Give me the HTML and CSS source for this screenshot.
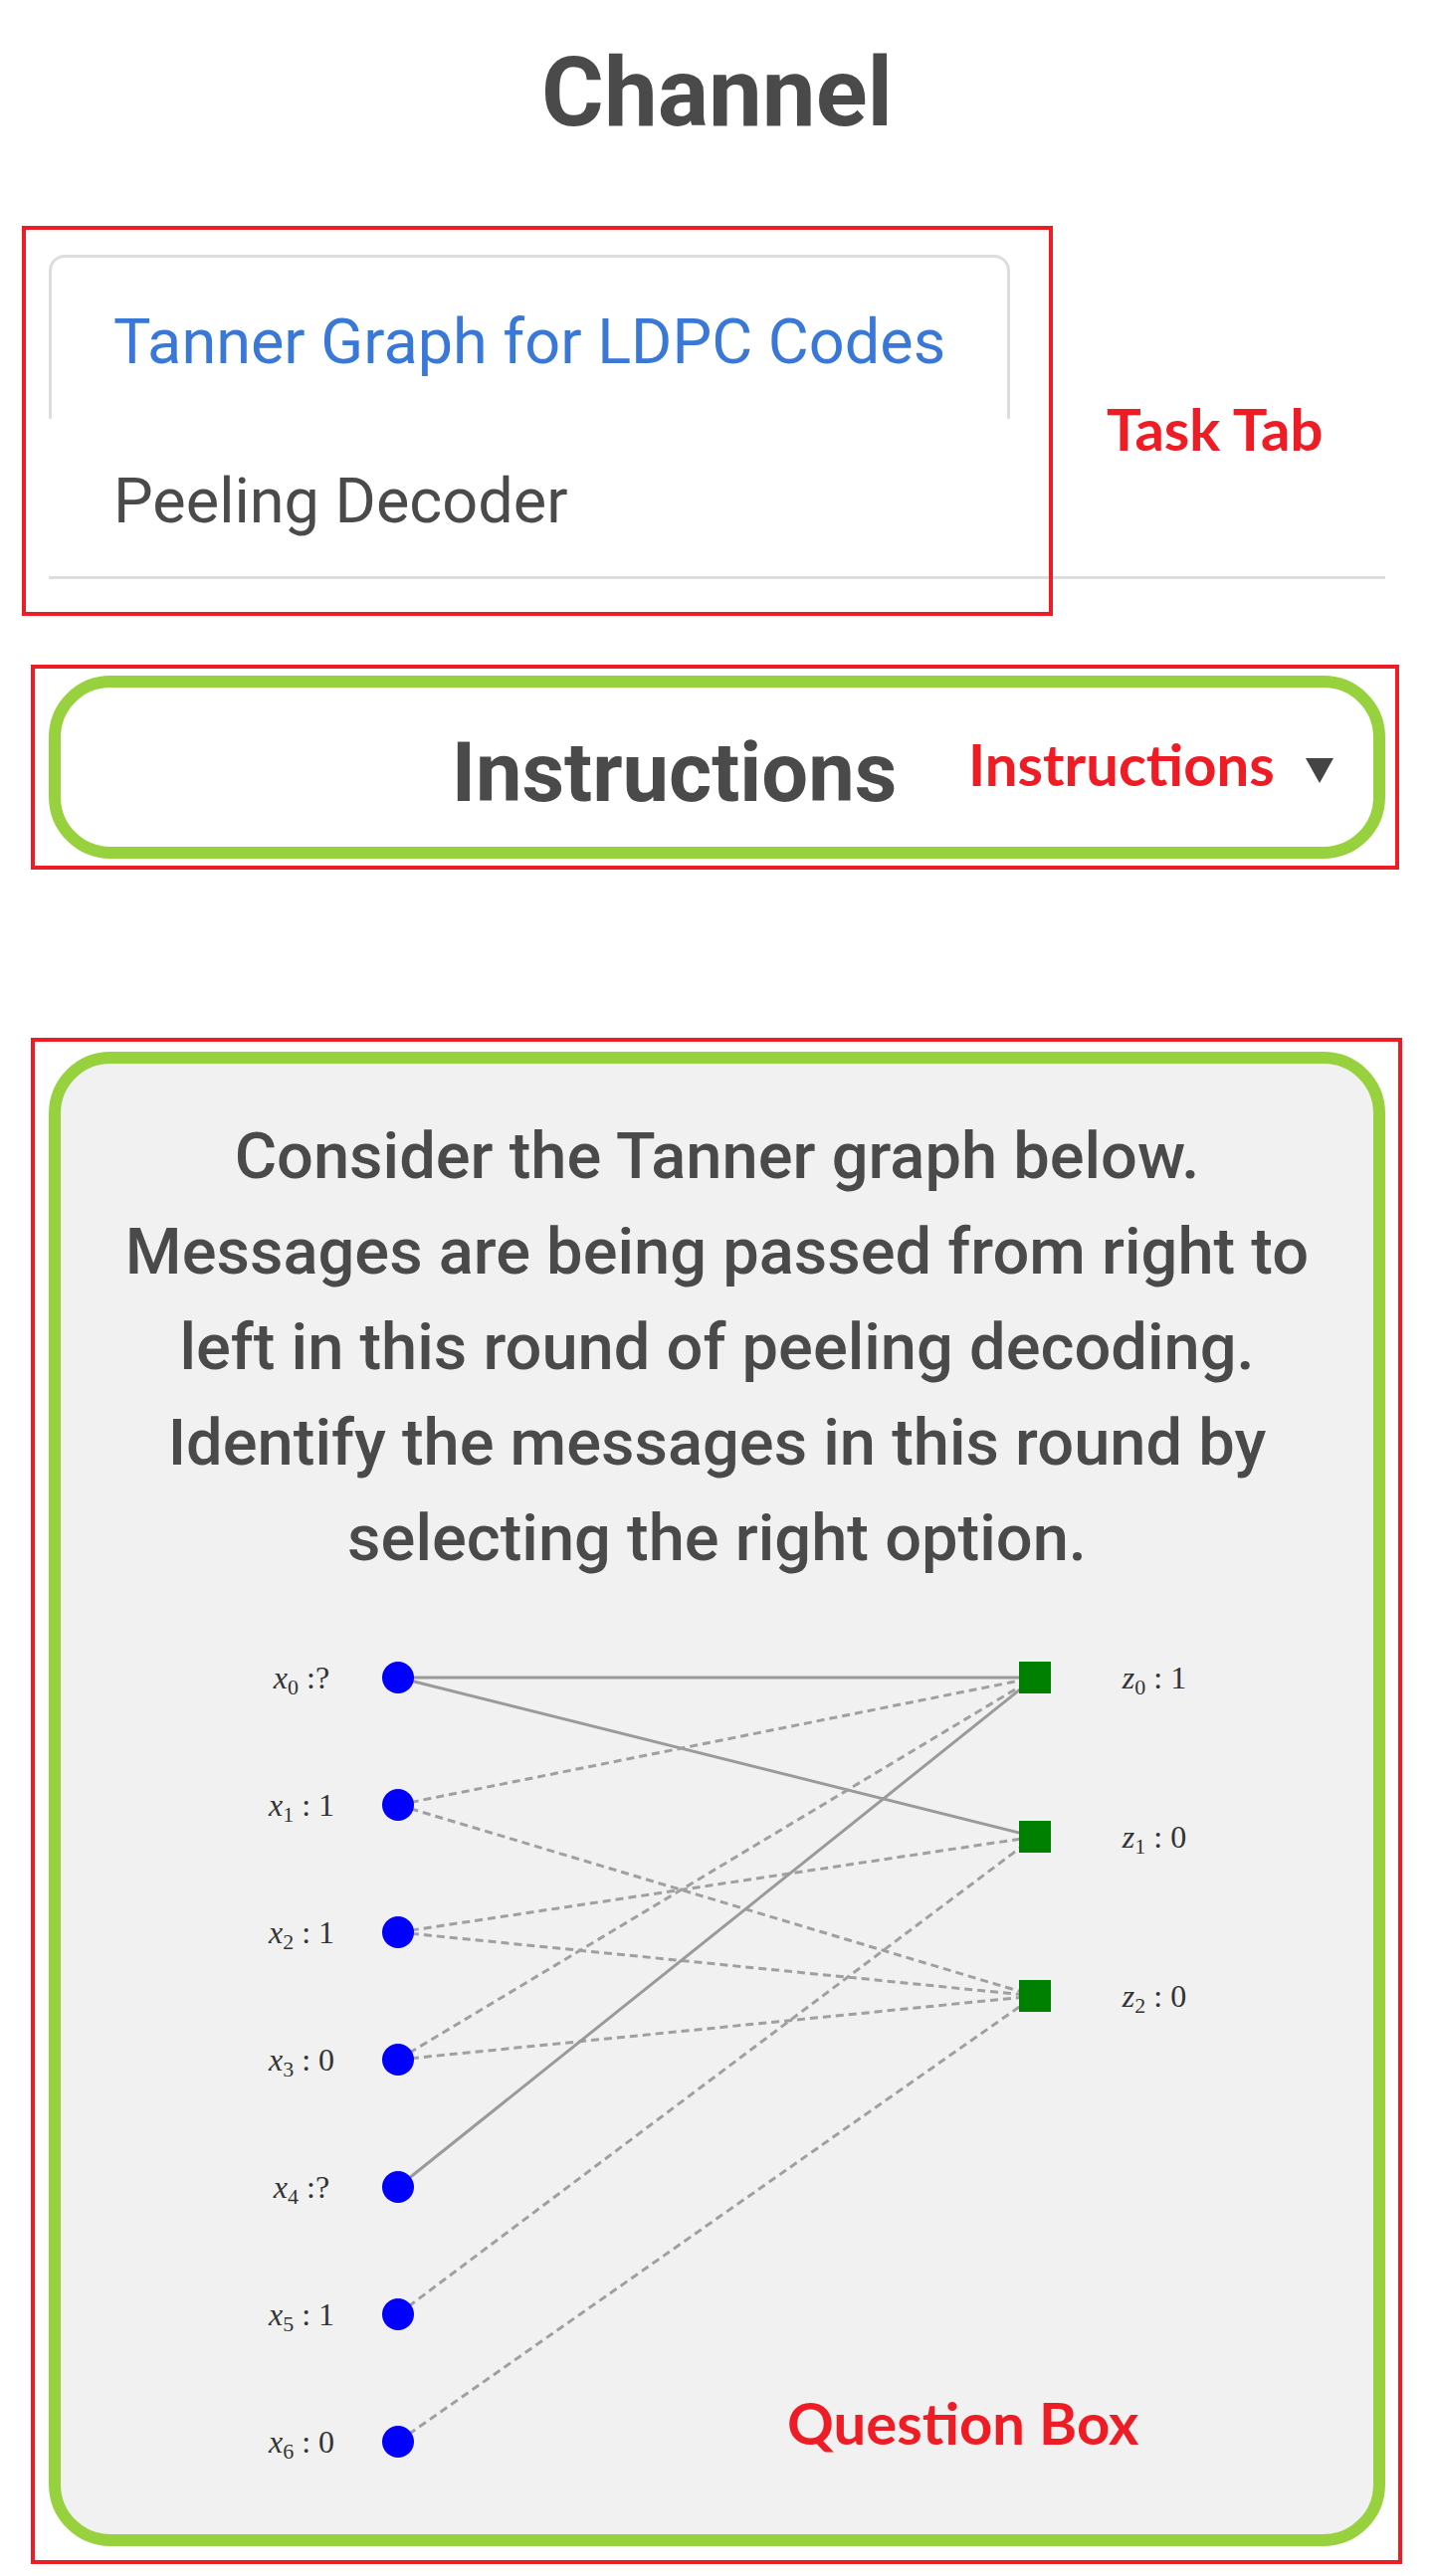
FILE: index.html
```html
<!DOCTYPE html>
<html lang="en">
<head>
<meta charset="utf-8">
<title>Channel</title>
<link rel="stylesheet" href="styles.css">
</head>
<body>
<main class="page">
  <h1 class="title">Channel</h1>

  <ul class="tabs">
    <li class="tab tab-hover"><a>Tanner Graph for LDPC Codes</a></li>
    <li class="tab tab-active"><a>Peeling Decoder</a></li>
  </ul>

  <section class="instructions">
    <h2 class="instructions-title">Instructions</h2>
    <span class="caret"></span>
  </section>

  <section class="question">
    <p class="question-text">Consider the Tanner graph below. Messages are being passed from right to left in this round of peeling decoding. Identify the messages in this round by selecting the right option.</p>
    <svg class="tanner" viewBox="61 1594 1319 953" xmlns="http://www.w3.org/2000/svg">
      <g class="edges">
        <line class="edge" x1="400" y1="1686" x2="1040" y2="1686"/>
        <line class="edge" x1="400" y1="1686" x2="1040" y2="1846"/>
        <line class="edge dash" x1="400" y1="1814" x2="1040" y2="1686"/>
        <line class="edge dash" x1="400" y1="1814" x2="1040" y2="2006"/>
        <line class="edge dash" x1="400" y1="1942" x2="1040" y2="1846"/>
        <line class="edge dash" x1="400" y1="1942" x2="1040" y2="2006"/>
        <line class="edge dash" x1="400" y1="2070" x2="1040" y2="1686"/>
        <line class="edge dash" x1="400" y1="2070" x2="1040" y2="2006"/>
        <line class="edge" x1="400" y1="2198" x2="1040" y2="1686"/>
        <line class="edge dash" x1="400" y1="2326" x2="1040" y2="1846"/>
        <line class="edge dash" x1="400" y1="2454" x2="1040" y2="2006"/>
      </g>
      <g class="vars">
        <circle class="var" cx="400" cy="1686" r="16"/>
        <circle class="var" cx="400" cy="1814" r="16"/>
        <circle class="var" cx="400" cy="1942" r="16"/>
        <circle class="var" cx="400" cy="2070" r="16"/>
        <circle class="var" cx="400" cy="2198" r="16"/>
        <circle class="var" cx="400" cy="2326" r="16"/>
        <circle class="var" cx="400" cy="2454" r="16"/>
      </g>
      <g class="checks">
        <rect class="chk" x="1024" y="1670" width="32" height="32"/>
        <rect class="chk" x="1024" y="1830" width="32" height="32"/>
        <rect class="chk" x="1024" y="1990" width="32" height="32"/>
      </g>
      <g class="labels">
        <text class="lbl" x="303" y="1697" text-anchor="middle"><tspan class="it">x</tspan><tspan class="sub" dy="6">0</tspan><tspan dy="-6"> :?</tspan></text>
        <text class="lbl" x="303" y="1825" text-anchor="middle"><tspan class="it">x</tspan><tspan class="sub" dy="6">1</tspan><tspan dy="-6"> : 1</tspan></text>
        <text class="lbl" x="303" y="1953" text-anchor="middle"><tspan class="it">x</tspan><tspan class="sub" dy="6">2</tspan><tspan dy="-6"> : 1</tspan></text>
        <text class="lbl" x="303" y="2081" text-anchor="middle"><tspan class="it">x</tspan><tspan class="sub" dy="6">3</tspan><tspan dy="-6"> : 0</tspan></text>
        <text class="lbl" x="303" y="2209" text-anchor="middle"><tspan class="it">x</tspan><tspan class="sub" dy="6">4</tspan><tspan dy="-6"> :?</tspan></text>
        <text class="lbl" x="303" y="2337" text-anchor="middle"><tspan class="it">x</tspan><tspan class="sub" dy="6">5</tspan><tspan dy="-6"> : 1</tspan></text>
        <text class="lbl" x="303" y="2465" text-anchor="middle"><tspan class="it">x</tspan><tspan class="sub" dy="6">6</tspan><tspan dy="-6"> : 0</tspan></text>
        <text class="lbl" x="1160" y="1697" text-anchor="middle"><tspan class="it">z</tspan><tspan class="sub" dy="6">0</tspan><tspan dy="-6"> : 1</tspan></text>
        <text class="lbl" x="1160" y="1857" text-anchor="middle"><tspan class="it">z</tspan><tspan class="sub" dy="6">1</tspan><tspan dy="-6"> : 0</tspan></text>
        <text class="lbl" x="1160" y="2017" text-anchor="middle"><tspan class="it">z</tspan><tspan class="sub" dy="6">2</tspan><tspan dy="-6"> : 0</tspan></text>
      </g>
    </svg>
  </section>
</main>

<div class="annot-box annot-box-tab"></div>
<div class="annot-label annot-label-tab">Task Tab</div>
<div class="annot-box annot-box-instr"></div>
<div class="annot-label annot-label-instr">Instructions</div>
<div class="annot-box annot-box-question"></div>
<div class="annot-label annot-label-question">Question Box</div>
</body>
</html>
```

FILE: styles.css
```css
html, body {
  margin: 0;
  padding: 0;
  background: #ffffff;
}

body {
  position: relative;
  font-family: Roboto, "Liberation Sans", Arial, sans-serif;
  color: #4a4a4a;
}

.page {
  padding: 1px 48px 30px 49px;
}

/* Title */
.title {
  margin: 44px 0 0;
  font-size: 96px;
  line-height: 96px;
  font-weight: 700;
  text-align: center;
  color: #4a4a4a;
}

/* Tabs */
.tabs {
  list-style: none;
  margin: 115px 0 0;
  padding: 0;
  display: flex;
  flex-wrap: wrap;
  border-bottom: 3px solid #dddddd;
}

.tab a {
  display: block;
  font-size: 63px;
  line-height: 90px;
  border: 3px solid transparent;
  border-bottom: 0;
  border-radius: 16px 16px 0 0;
  padding: 40px 62px 32px;
  white-space: nowrap;
}

.tab-hover a {
  border-color: #dddddd;
  color: #3a78d8;
}

.tab-active a {
  padding: 35px 62px 30px;
  color: #4a4a4a;
}

/* Instructions */
.instructions {
  margin-top: 97px;
  display: flex;
  align-items: flex-start;
  border: 12px solid #97d23e;
  border-radius: 62px;
  padding: 36px 40px 24px 0;
  background: #ffffff;
}

.instructions-title {
  flex: 1;
  margin: 0;
  text-align: center;
  font-size: 83px;
  line-height: 100px;
  font-weight: 700;
  color: #4a4a4a;
}

.caret {
  width: 0;
  height: 0;
  border-left: 14.5px solid transparent;
  border-right: 14.5px solid transparent;
  border-top: 25px solid #444444;
  margin-left: 18px;
  margin-top: -5px;
  align-self: center;
}

/* Question box */
.question {
  margin-top: 194px;
  border: 12px solid #97d23e;
  border-radius: 62px;
  background: #f1f1f1;
  padding-top: 45px;
  overflow: hidden;
}

.question-text {
  margin: 0;
  padding: 0 37px;
  font-size: 65px;
  line-height: 96px;
  font-weight: 500;
  text-align: center;
  color: #4a4a4a;
}

.tanner {
  display: block;
  width: 1319px;
  height: 953px;
}

.edge {
  stroke: #9a9a9a;
  stroke-width: 3;
  fill: none;
}

.edge.dash {
  stroke: #a0a0a0;
  stroke-dasharray: 8 5;
}

.var {
  fill: #0000ff;
}

.chk {
  fill: #008000;
}

.lbl {
  font-family: "Liberation Serif", "DejaVu Serif", serif;
  font-size: 32px;
  fill: #333333;
}

.lbl .it {
  font-style: italic;
}

.lbl .sub {
  font-size: 22px;
}

/* Annotation overlays */
.annot-box {
  position: absolute;
  box-sizing: border-box;
  border: 4px solid #ee1c25;
  pointer-events: none;
}

.annot-box-tab {
  left: 22px;
  top: 227px;
  width: 1036px;
  height: 392px;
}

.annot-box-instr {
  left: 31px;
  top: 668px;
  width: 1375px;
  height: 206px;
}

.annot-box-question {
  left: 31px;
  top: 1043px;
  width: 1378px;
  height: 1534px;
}

.annot-label {
  position: absolute;
  font-family: Lato, "Liberation Sans", sans-serif;
  font-weight: 700;
  font-size: 58px;
  line-height: 58px;
  color: #ee1c25;
  white-space: nowrap;
}

.annot-label-tab {
  left: 1112px;
  top: 402px;
}

.annot-label-instr {
  left: 973px;
  top: 739px;
}

.annot-label-question {
  left: 791px;
  top: 2406px;
}
```
